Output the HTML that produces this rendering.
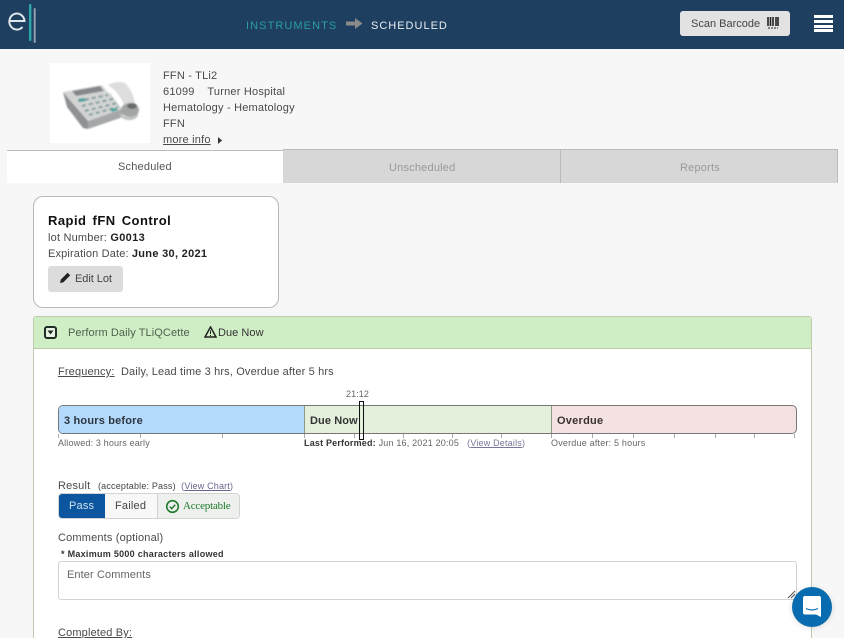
<!DOCTYPE html>
<html style="overflow:hidden;width:844px;height:638px"><head><meta charset="utf-8"><style>
html,body{margin:0;padding:0}
body{width:844px;height:638px;overflow:hidden;position:relative;background:#f7f7f7;font-family:"Liberation Sans",sans-serif;color:#444}
#w{position:absolute;left:0;top:0;width:844px;height:638px;overflow:hidden}
.a{position:absolute;white-space:nowrap}
.t{font-size:11px;line-height:16px;letter-spacing:.2px;color:#4a4a4a}
.s{font-size:9px;line-height:12px;letter-spacing:.2px;color:#666}
b{color:#222}
u{text-underline-offset:1px}
.tick{position:absolute;top:434px;width:1px;height:4px;background:#aaa}
</style></head><body><div id="w">
<div class="a" style="left:0;top:0;width:844px;height:49px;background:#1e3f60"></div>
<svg class="a" style="left:0;top:0" width="50" height="49"><path d="M10 21H24.500A7.600 8 0 1 0 22.500 27" fill="none" stroke="#dfe6ec" stroke-width="2"/><rect x="29" y="4" width="2.400" height="37" rx="1" fill="#2fa6a8"/><rect x="33.700" y="8" width="2" height="35" rx="1" fill="#8fa0ae"/></svg>
<div class="a" style="left:246px;top:19px;font-size:11px;line-height:14px;letter-spacing:1.08px;color:#2b9ea4">INSTRUMENTS</div>
<svg class="a" style="left:346px;top:17px" width="17" height="14"><path d="M0 4.500H9V1L16.500 6.500L9 12V8.500H0Z" fill="#8a8a8a"/></svg>
<div class="a" style="left:371px;top:19px;font-size:11px;line-height:14px;letter-spacing:1px;color:#e8edf1">SCHEDULED</div>
<div class="a" style="left:680px;top:11px;width:110px;height:25px;background:#e2e2e2;border-radius:3px"></div>
<div class="a" style="left:691px;top:17px;font-size:11px;line-height:14px;letter-spacing:0;color:#444">Scan Barcode</div>
<svg class="a" style="left:767px;top:17px" width="12" height="12"><path d="M1 0V9M3.500 0V9M6 0V9M9 0V9M11 0V9" stroke="#222" stroke-width="1.600"/><path d="M1 11H11" stroke="#222" stroke-dasharray="2 1"/></svg>
<div class="a" style="left:814px;top:15px;width:19px;height:3px;background:#fff;box-shadow:0 5px 0 #fff,0 10px 0 #fff,0 14px 0 #fff"></div>

<div class="a" style="left:50px;top:63px;width:100px;height:80px;background:#fff"></div>
<svg class="a" style="left:50px;top:63px" width="100" height="80"><defs><filter id="b"><feGaussianBlur stdDeviation=".7"/></filter></defs><g filter="url(#b)">
<path d="M13 29L52 22L62 34L38 58Z" fill="#d8dad9"/>
<path d="M13 29L38 58L38 66L33 65L17 44Z" fill="#8f9294"/>
<path d="M38 58L72 46L73 54L38 66Z" fill="#a5a7a8"/>
<path d="M38 58L72 46L60 30L13 29Z" fill="#d2d4d3"/>
<path d="M22 28L50 23L54 28L26 33Z" fill="#85888a"/>
<path d="M28 38L58 32M32 43L63 36M35 48L67 40M39 52L68 44" stroke="#7f9ba1" stroke-width="2" stroke-dasharray="4 3"/>
<path d="M28 36l6-1l2 3l-6 1zM60 46l6-1l2 2l-6 2z" fill="#45a39d"/>
<path d="M58 22C64 19 70 18 75 20C80 25 84 33 85 40L74 42C71 34 66 27 58 22Z" fill="#dcdddc"/>
<ellipse cx="80" cy="47" rx="9" ry="7" fill="#a3a5a5"/><ellipse cx="82" cy="43" rx="5" ry="3" fill="#6a6c6c"/>
<path d="M70 50C74 55 84 56 88 50L88 53C83 59 74 58 70 53Z" fill="#c0c1c1"/>
</g></svg>

<div class="a t" style="left:163px;top:68px">FFN - TLi2</div>
<div class="a t" style="left:163px;top:84px">61099 &nbsp;&nbsp; Turner Hospital</div>
<div class="a t" style="left:163px;top:100px">Hematology - Hematology</div>
<div class="a t" style="left:163px;top:116px">FFN</div>
<div class="a t" style="left:163px;top:132px"><u>more info</u></div>
<svg class="a" style="left:217px;top:137px" width="6" height="8"><path d="M1 0L5 3.500L1 7Z" fill="#333"/></svg>

<div class="a" style="left:7px;top:150px;width:276px;height:33px;background:#fff;border-top:1px solid #bbb;box-sizing:border-box"></div>
<div class="a" style="left:283px;top:149px;width:277px;height:34px;background:#d7d7d7;border-top:1px solid #bbb;box-sizing:border-box"></div>
<div class="a" style="left:560px;top:149px;width:278px;height:34px;background:#d7d7d7;border:1px solid #bbb;border-bottom:0;box-sizing:border-box"></div>
<div class="a t" style="left:118px;top:159px;color:#555">Scheduled</div>
<div class="a t" style="left:389px;top:160px;color:#999">Unscheduled</div>
<div class="a t" style="left:680px;top:160px;color:#999">Reports</div>

<div class="a" style="left:33px;top:196px;width:246px;height:112px;box-sizing:border-box;background:#fff;border:1px solid #b8b8b8;border-radius:10px"></div>
<div class="a" style="left:48px;top:213px;font-size:13px;line-height:16px;font-weight:bold;word-spacing:2px;letter-spacing:.47px;color:#111">Rapid fFN Control</div>
<div class="a t" style="left:48px;top:230px;letter-spacing:.2px">lot Number: <b style="letter-spacing:.35px">G0013</b></div>
<div class="a t" style="left:48px;top:246px;letter-spacing:.15px">Expiration Date: <b style="letter-spacing:.3px">June 30, 2021</b></div>
<div class="a" style="left:48px;top:266px;width:75px;height:26px;background:#dcdcdc;border-radius:3px"></div>
<svg class="a" style="left:59px;top:271px" width="13" height="13"><path d="M1 12L1.800 8.600L8.600 1.800L11.200 4.400L4.400 11.200Z" fill="#222"/></svg>
<div class="a t" style="left:75px;top:271px;letter-spacing:-.05px;color:#444">Edit Lot</div>

<div class="a" style="left:33px;top:316px;width:779px;height:340px;box-sizing:border-box;background:#fff;border:1px solid #bdcba8;border-radius:3px 3px 0 0"></div>
<div class="a" style="left:34px;top:317px;width:777px;height:32px;background:#cfeec6;border-bottom:1px solid #bdcba8;box-sizing:border-box"></div>
<div class="a" style="left:44px;top:326px;width:13px;height:13px;box-sizing:border-box;border:2px solid #1f2d26;border-radius:3px;background:#e8f3e4"></div>
<svg class="a" style="left:47px;top:330px" width="8" height="6"><path d="M0.500 0.500H6.500L3.500 4.500Z" fill="#1f2d26"/></svg>
<div class="a t" style="left:68px;top:325px;letter-spacing:.09px;color:#50604f">Perform Daily TLiQCette</div>
<svg class="a" style="left:204px;top:326px" width="13" height="12"><path d="M6.500 1L12 11H1Z" fill="none" stroke="#222" stroke-width="1.500"/><path d="M6.500 4.500V8M6.500 9V10" stroke="#222"/></svg>
<div class="a t" style="left:218px;top:325px;letter-spacing:.05px;color:#333">Due Now</div>

<div class="a t" style="left:58px;top:364px;letter-spacing:.15px"><u>Frequency:</u>&nbsp; Daily, Lead time 3 hrs, Overdue after 5 hrs</div>
<div class="a s" style="left:346px;top:388px;letter-spacing:.1px">21:12</div>

<div class="a" style="left:58px;top:405px;width:739px;height:29px;box-sizing:border-box;border:1px solid #777;border-radius:5px;overflow:hidden;background:#f4e2e2">
<div style="position:absolute;left:0;top:0;width:245px;height:27px;background:#b3dafc"></div>
<div style="position:absolute;left:245px;top:0;width:248px;height:27px;background:#e5f0dc;border-left:1px solid #8f9a85;border-right:1px solid #8f9a85;box-sizing:border-box"></div>
</div>
<div class="a" style="left:64px;top:414px;font-size:11px;line-height:14px;font-weight:bold;letter-spacing:.18px;color:#2d3640">3 hours before</div>
<div class="a" style="left:310px;top:414px;font-size:11px;line-height:14px;font-weight:bold;letter-spacing:.1px;color:#333">Due Now</div>
<div class="a" style="left:557px;top:414px;font-size:11px;line-height:14px;font-weight:bold;letter-spacing:.25px;color:#3a3030">Overdue</div>
<i class="tick" style="left:58px"></i><i class="tick" style="left:140px"></i><i class="tick" style="left:222px"></i><i class="tick" style="left:304px"></i><i class="tick" style="left:354px"></i><i class="tick" style="left:403px"></i><i class="tick" style="left:452px"></i><i class="tick" style="left:501px"></i><i class="tick" style="left:551px"></i><i class="tick" style="left:592px"></i><i class="tick" style="left:633px"></i><i class="tick" style="left:674px"></i><i class="tick" style="left:715px"></i><i class="tick" style="left:754px"></i><i class="tick" style="left:794px"></i>
<div class="a" style="left:359px;top:401px;width:5px;height:39px;box-sizing:border-box;border:1px solid #111;background:transparent"></div>
<div class="a s" style="left:58px;top:437px;letter-spacing:.15px">Allowed: 3 hours early</div>
<div class="a s" style="left:304px;top:437px;letter-spacing:.19px"><b style="color:#333">Last Performed:</b> Jun 16, 2021 20:05 &nbsp;&nbsp;<span style="color:#77779a">(<u>View Details</u>)</span></div>
<div class="a s" style="left:551px;top:437px;letter-spacing:.2px">Overdue after: 5 hours</div>

<div class="a t" style="left:58px;top:478px;letter-spacing:.2px">Result</div>
<div class="a s" style="left:98px;top:480px;letter-spacing:.18px;color:#444">(acceptable: Pass) &nbsp;<span style="color:#66668f">(<u>View Chart</u>)</span></div>
<div class="a" style="left:58px;top:493px;width:182px;height:26px;box-sizing:border-box;border:1px solid #d3d3d3;border-radius:4px;background:#f8f8f8;overflow:hidden">
<div style="position:absolute;left:-1px;top:-1px;width:47px;height:26px;background:#0b569f"></div>
<div style="position:absolute;left:98px;top:-1px;width:83px;height:26px;background:#eef0ee;border-left:1px solid #d0d0d0;box-sizing:border-box"></div>
</div>
<div class="a t" style="left:69px;top:498px;color:#cfe0f0">Pass</div>
<div class="a t" style="left:115px;top:498px;color:#444">Failed</div>
<svg class="a" style="left:165px;top:499px" width="15" height="15"><circle cx="7.500" cy="7.500" r="5.800" fill="none" stroke="#1e7a2c" stroke-width="1.600"/><path d="M4.800 7.600L6.800 9.600L10.200 5.800" fill="none" stroke="#1e7a2c" stroke-width="1.500"/></svg>
<div class="a" style="left:183px;top:499px;font-family:'Liberation Serif',serif;font-size:11px;line-height:15px;letter-spacing:-.2px;color:#1e7a2c">Acceptable</div>
<div class="a t" style="left:58px;top:530px;letter-spacing:.17px">Comments (optional)</div>
<div class="a" style="left:61px;top:548px;font-size:9px;line-height:12px;font-weight:bold;letter-spacing:.28px;color:#333">* Maximum 5000 characters allowed</div>
<div class="a" style="left:58px;top:561px;width:739px;height:39px;box-sizing:border-box;background:#fff;border:1px solid #d3d3d3;border-radius:3px"></div>
<div class="a t" style="left:67px;top:567px;letter-spacing:.1px;color:#666">Enter Comments</div>
<svg class="a" style="left:787px;top:590px" width="9" height="9"><path d="M1 8L8 1M4 8L8 4" stroke="#555"/></svg>
<div class="a t" style="left:58px;top:625px;letter-spacing:.15px"><u>Completed By:</u></div>

<div class="a" style="left:792px;top:587px;width:40px;height:40px;border-radius:50%;background:#0a6cb0;box-shadow:0 1px 6px rgba(0,0,0,.12)"></div>
<svg class="a" style="left:802px;top:596px" width="20" height="22"><path d="M3 0H17C18.500 0 19 1 19 2V21L14 18.500H3C1.500 18.500 1 17.500 1 16.500V2C1 1 1.500 0 3 0Z" fill="#fff"/><path d="M4 12.500C8 14.500 12 14.500 16 12.500" fill="none" stroke="#0a6cb0" stroke-width="1.200"/></svg>
</div></body></html>
